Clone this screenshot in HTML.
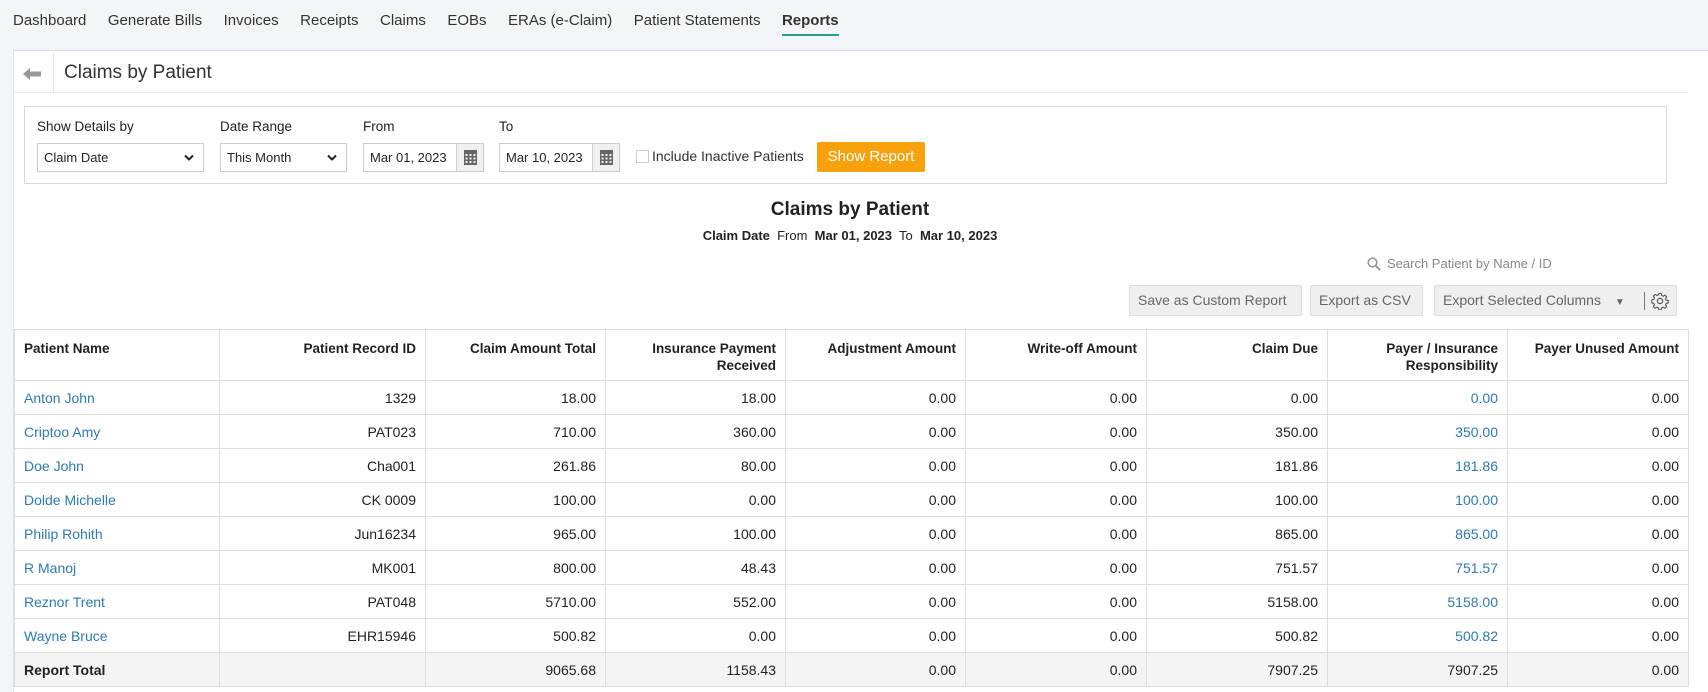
<!DOCTYPE html>
<html><head><meta charset="utf-8"><style>
*{box-sizing:border-box;margin:0;padding:0}
body{width:1708px;height:692px;overflow:hidden;background:#f4f5f8;font-family:"Liberation Sans",sans-serif;color:#222;position:relative}
.abs{position:absolute}
.nav{top:12px;left:13px;font-size:15px;color:#333;white-space:nowrap}
.nav span{margin-right:21.5px}
.panel{left:13px;top:50px;right:0;bottom:0;background:#fff;border-left:1px solid #e0e0e0;border-top:1px solid #dcdde2}
.lbl{font-size:13.5px;color:#222;top:119px}
.inp{top:143px;height:29px;border:1px solid #ccc;background:#fff;font-size:13px;padding:0 6px;line-height:27px;color:#222}
.cal{position:absolute;right:0;top:0;bottom:0;width:27px;background:#f0f0f0;border-left:1px solid #ccc}
.chev{position:absolute;right:9px;top:10px}
.btn{top:285px;height:31px;background:#efefef;border:1px solid #ddd;border-radius:2px;font-size:14px;color:#666;line-height:29px;padding:0 8px}
table{position:absolute;left:14px;top:329px;border-collapse:collapse;font-size:14px}
td,th{border:1px solid #ddd;padding:0 9px;height:34px;text-align:right;vertical-align:middle}
th{height:51px;vertical-align:top;padding-top:10px;font-weight:bold;font-size:13.5px;line-height:17px}
td:first-child,th:first-child{text-align:left}
a{color:#2e7bb4;text-decoration:none}
tr.tot td{background:#f4f4f4;font-weight:normal}
</style></head><body>
<div class="abs nav"><span>Dashboard</span><span>Generate Bills</span><span>Invoices</span><span>Receipts</span><span>Claims</span><span>EOBs</span><span>ERAs (e-Claim)</span><span>Patient Statements</span><span style="font-weight:bold;border-bottom:2px solid #2a9d8f;padding-bottom:5px">Reports</span></div>
<div class="abs panel"></div>
<div class="abs" style="left:53px;top:53px;width:1px;height:39px;background:#e3e3e3"></div>
<div class="abs" style="left:14px;top:92px;width:1674px;height:1px;background:#ececec"></div>
<svg class="abs" style="left:23px;top:67px" width="20" height="14"><path d="M0 7 L7 1 V4.5 H18 V9.5 H7 V13 Z" fill="#999"/></svg>
<div class="abs" style="left:64px;top:62px;font-size:19px;color:#333">Claims by Patient</div>
<div class="abs" style="left:24px;top:106px;width:1643px;height:78px;border:1px solid #d9d9d9"></div>
<div class="abs lbl" style="left:37px">Show Details by</div>
<div class="abs lbl" style="left:220px">Date Range</div>
<div class="abs lbl" style="left:363px">From</div>
<div class="abs lbl" style="left:499px">To</div>
<div class="abs inp" style="left:37px;width:167px">Claim Date<svg class="chev" width="10" height="8"><path d="M1 1.5 L5 5.5 L9 1.5" fill="none" stroke="#222" stroke-width="2"/></svg></div>
<div class="abs inp" style="left:220px;width:127px">This Month<svg class="chev" width="10" height="8"><path d="M1 1.5 L5 5.5 L9 1.5" fill="none" stroke="#222" stroke-width="2"/></svg></div>
<div class="abs inp" style="left:363px;width:121px">Mar 01, 2023<div class="cal"><svg width="27" height="27"><rect x="7" y="6" width="13" height="15" fill="#666"/><g fill="#f0f0f0"><rect x="8.5" y="10" width="2" height="2"/><rect x="12.5" y="10" width="2" height="2"/><rect x="16.5" y="10" width="2" height="2"/><rect x="8.5" y="13.5" width="2" height="2"/><rect x="12.5" y="13.5" width="2" height="2"/><rect x="16.5" y="13.5" width="2" height="2"/><rect x="8.5" y="17" width="2" height="2"/><rect x="12.5" y="17" width="2" height="2"/><rect x="16.5" y="17" width="2" height="2"/></g></svg></div></div>
<div class="abs inp" style="left:499px;width:121px">Mar 10, 2023<div class="cal"><svg width="27" height="27"><rect x="7" y="6" width="13" height="15" fill="#666"/><g fill="#f0f0f0"><rect x="8.5" y="10" width="2" height="2"/><rect x="12.5" y="10" width="2" height="2"/><rect x="16.5" y="10" width="2" height="2"/><rect x="8.5" y="13.5" width="2" height="2"/><rect x="12.5" y="13.5" width="2" height="2"/><rect x="16.5" y="13.5" width="2" height="2"/><rect x="8.5" y="17" width="2" height="2"/><rect x="12.5" y="17" width="2" height="2"/><rect x="16.5" y="17" width="2" height="2"/></g></svg></div></div>
<div class="abs" style="left:636px;top:150px;width:13px;height:13px;border:1px solid #ccc"></div>
<div class="abs" style="left:652px;top:148px;font-size:14px;color:#333">Include Inactive Patients</div>
<div class="abs" style="left:817px;top:142px;width:108px;height:30px;background:#f7a20c;border-radius:2px;color:#fff;font-size:15px;line-height:30px;text-align:center">Show Report</div>
<div class="abs" style="left:0;width:1700px;text-align:center;top:199px;font-size:19px;font-weight:bold;color:#222">Claims by Patient</div>
<div class="abs" style="left:0;width:1700px;text-align:center;top:228px;font-size:13px;color:#222"><b>Claim Date</b>&nbsp; From &nbsp;<b>Mar 01, 2023</b>&nbsp; To &nbsp;<b>Mar 10, 2023</b></div>
<svg class="abs" style="left:1367px;top:257px" width="14" height="14"><circle cx="5.5" cy="5.5" r="4.3" fill="none" stroke="#999" stroke-width="1.6"/><path d="M8.7 8.7 L13 13" stroke="#999" stroke-width="2"/></svg>
<div class="abs" style="left:1387px;top:256px;font-size:13px;color:#888">Search Patient by Name / ID</div>
<div class="abs btn" style="left:1129px;width:173px">Save as Custom Report</div>
<div class="abs btn" style="left:1310px;width:113px">Export as CSV</div>
<div class="abs btn" style="left:1434px;width:243px">Export Selected Columns <span style="font-size:10px;margin-left:10px">&#9660;</span><span style="position:absolute;left:209px;top:6px;width:1px;height:18px;background:#777"></span><svg style="position:absolute;left:216px;top:6px" width="18" height="18" viewBox="0 0 18 18"><circle cx="9" cy="9" r="2.6" fill="none" stroke="#555" stroke-width="1.2"/><path d="M7.8 1.5h2.4l.4 2 1.6.7 1.7-1.1 1.7 1.7-1.1 1.7.7 1.6 2 .4v2.4l-2 .4-.7 1.6 1.1 1.7-1.7 1.7-1.7-1.1-1.6.7-.4 2H7.8l-.4-2-1.6-.7-1.7 1.1-1.7-1.7 1.1-1.7-.7-1.6-2-.4V7.8l2-.4.7-1.6-1.1-1.7 1.7-1.7 1.7 1.1 1.6-.7z" fill="none" stroke="#555" stroke-width="1.1"/></svg></div>
<table>
<colgroup><col style="width:205px"><col style="width:206px"><col style="width:180px"><col style="width:180px"><col style="width:180px"><col style="width:181px"><col style="width:181px"><col style="width:180px"><col style="width:181px"></colgroup>
<tr><th>Patient Name</th><th>Patient Record ID</th><th>Claim Amount Total</th><th>Insurance Payment<br>Received</th><th>Adjustment Amount</th><th>Write-off Amount</th><th>Claim Due</th><th>Payer / Insurance<br>Responsibility</th><th>Payer Unused Amount</th></tr>
<tr><td><a>Anton John</a></td><td>1329</td><td>18.00</td><td>18.00</td><td>0.00</td><td>0.00</td><td>0.00</td><td><a>0.00</a></td><td>0.00</td></tr>
<tr><td><a>Criptoo Amy</a></td><td>PAT023</td><td>710.00</td><td>360.00</td><td>0.00</td><td>0.00</td><td>350.00</td><td><a>350.00</a></td><td>0.00</td></tr>
<tr><td><a>Doe John</a></td><td>Cha001</td><td>261.86</td><td>80.00</td><td>0.00</td><td>0.00</td><td>181.86</td><td><a>181.86</a></td><td>0.00</td></tr>
<tr><td><a>Dolde Michelle</a></td><td>CK 0009</td><td>100.00</td><td>0.00</td><td>0.00</td><td>0.00</td><td>100.00</td><td><a>100.00</a></td><td>0.00</td></tr>
<tr><td><a>Philip Rohith</a></td><td>Jun16234</td><td>965.00</td><td>100.00</td><td>0.00</td><td>0.00</td><td>865.00</td><td><a>865.00</a></td><td>0.00</td></tr>
<tr><td><a>R Manoj</a></td><td>MK001</td><td>800.00</td><td>48.43</td><td>0.00</td><td>0.00</td><td>751.57</td><td><a>751.57</a></td><td>0.00</td></tr>
<tr><td><a>Reznor Trent</a></td><td>PAT048</td><td>5710.00</td><td>552.00</td><td>0.00</td><td>0.00</td><td>5158.00</td><td><a>5158.00</a></td><td>0.00</td></tr>
<tr><td><a>Wayne Bruce</a></td><td>EHR15946</td><td>500.82</td><td>0.00</td><td>0.00</td><td>0.00</td><td>500.82</td><td><a>500.82</a></td><td>0.00</td></tr>
<tr class="tot"><td><b>Report Total</b></td><td></td><td>9065.68</td><td>1158.43</td><td>0.00</td><td>0.00</td><td>7907.25</td><td>7907.25</td><td>0.00</td></tr>
</table>
</body></html>
